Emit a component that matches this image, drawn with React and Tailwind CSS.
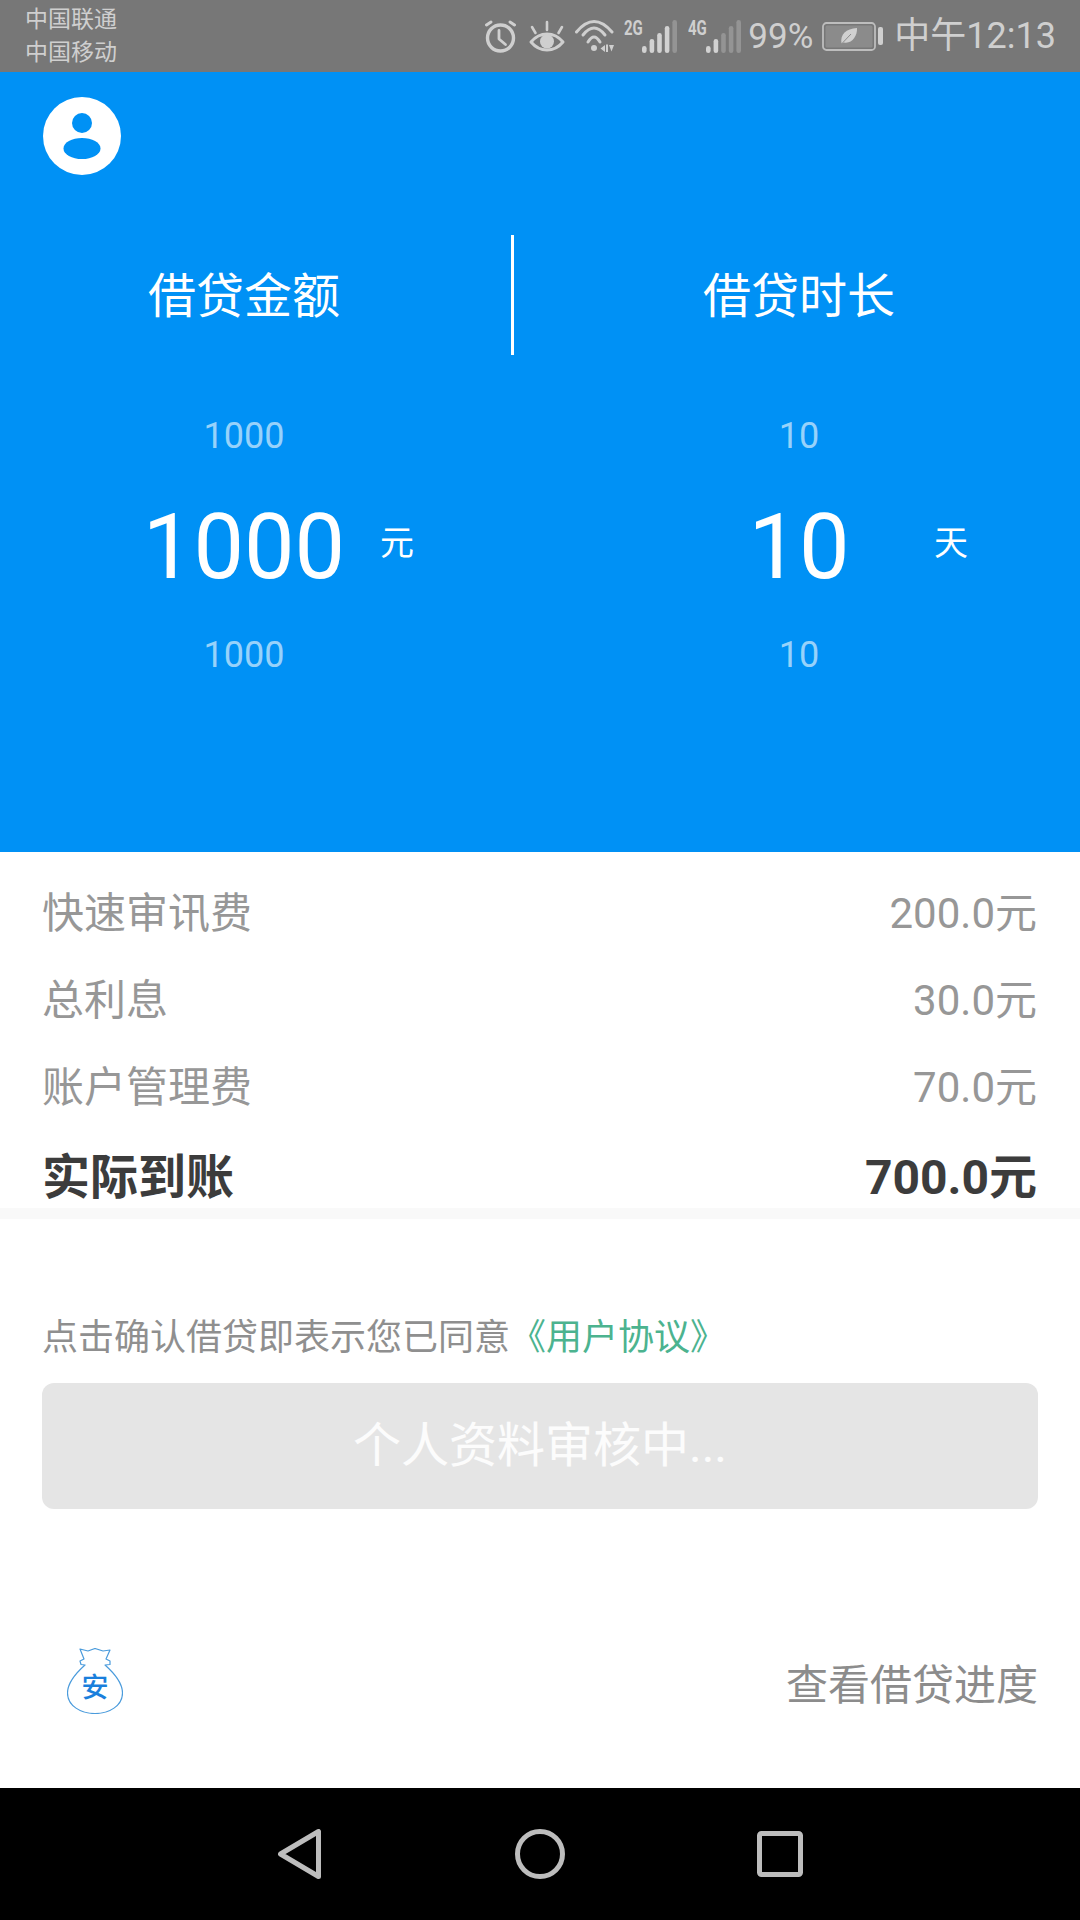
const FONT = "font-['Roboto','Noto_Sans_CJK_SC',sans-serif]";

const FEES = [
  ["快速审讯费", "200.0元"],
  ["总利息", "30.0元"],
  ["账户管理费", "70.0元"],
];

const BARS = [7, 14, 20, 27, 33];

function Alarm() {
  return (
    <svg width="32" height="33" viewBox="0 0 32 33" fill="none" stroke="#cfcfcf" strokeWidth="3.4" strokeLinecap="round" strokeLinejoin="round">
      <circle cx="15.500" cy="18" r="13" />
      <path d="M14 10.500v8.500l6.500 5.500" strokeWidth="2.800" />
      <path d="M1.500 5 6 2M25 2l4.500 3" strokeWidth="3" />
    </svg>
  );
}

function Eye() {
  return (
    <svg width="36" height="33" viewBox="0 0 36 33" fill="none" stroke="#cfcfcf" strokeWidth="3" strokeLinecap="round" strokeLinejoin="round">
      <path d="M2 22C7 16 12 14 18 14s11 2 16 8c-5 6-10 8-16 8S7 28 2 22Z" />
      <circle cx="18" cy="21.500" r="7" fill="#cfcfcf" stroke="none" />
      <path d="M18 2v8M3 7l3.500 6M33 7l-3.500 6" strokeWidth="2.600" />
    </svg>
  );
}

function Wifi() {
  return (
    <svg width="39" height="33" viewBox="0 0 39 33" fill="none" stroke="#cfcfcf" strokeWidth="3" strokeLinecap="round">
      <path d="M1.500 12Q19-9 37 12" />
      <path d="M8 15Q19 1 30 15" />
      <path d="M13 22Q19 12 25 22" />
      <circle cx="19" cy="28" r="3" fill="#cfcfcf" stroke="none" />
      <path d="M25.500 28.500 30 25v7ZM31 24.500h2V32h-2ZM34 25h5l-2.500 6.500Z" fill="#cfcfcf" stroke="none" />
    </svg>
  );
}

function Signal({ label, active }) {
  return (
    <div className="flex h-[34px] w-[54px] items-start">
      <span className="w-[18px] origin-left scale-x-75 text-[20px] leading-[18px] font-bold text-[#cfcfcf]">{label}</span>
      <svg width="36" height="34" viewBox="0 0 36 34">
        {BARS.map((h, i) => (
          <rect
            key={h}
            x={i * 7.6}
            y={34 - h}
            width="4.600"
            height={h}
            rx="2.300"
            fill={i < active ? "#d2d2d2" : "#949494"}
          />
        ))}
      </svg>
    </div>
  );
}

function Battery() {
  return (
    <svg width="61" height="29" viewBox="0 0 61 29" fill="none">
      <rect x="1" y="1" width="52" height="27" rx="3.500" stroke="#bdbdbd" strokeWidth="1.800" />
      <rect x="3.500" y="3.500" width="47" height="22" rx="1.500" fill="#8b8b8b" />
      <path d="M19.500 21.500C18 12 24 7 35 6c.5 8-5 16-13 14.500Z" fill="#d0d0d0" />
      <path d="M19 22.500 29 12" stroke="#8b8b8b" strokeWidth="1" />
      <rect x="56" y="5" width="5" height="18" rx="2" fill="#cfcfcf" />
    </svg>
  );
}

function StatusBar() {
  return (
    <div className="flex h-[72px] shrink-0 items-center justify-between bg-[#777777] pl-[25px] pr-[24px] text-[#cfcfcf]">
      <div className="text-[23px] leading-[33px]">
        <div>中国联通</div>
        <div>中国移动</div>
      </div>
      <div className="flex items-center">
        <Alarm />
        <div className="ml-[12px]"><Eye /></div>
        <div className="ml-[10px]"><Wifi /></div>
        <div className="ml-[10px]"><Signal label="2G" active={4} /></div>
        <div className="ml-[10px]"><Signal label="4G" active={2} /></div>
        <span className="ml-[6px] text-[35px] leading-none">99%</span>
        <div className="ml-[9px]"><Battery /></div>
        <span className="ml-[11px] text-[36px] leading-none">中午12:13</span>
      </div>
    </div>
  );
}

function Wheel({ title, value, unit, offset, unitGap, className }) {
  return (
    <div className={className}>
      <div className="flex h-[120px] items-center pt-[4px] text-[48px] text-white">
        <div style={{ marginLeft: offset }} className="w-[240px] text-center">{title}</div>
      </div>
      <div className="mt-[51px] text-[36px] leading-[60px] text-white/60">
        <div style={{ marginLeft: offset }} className="w-[240px] text-center">{value}</div>
      </div>
      <div className="mt-[34px] flex h-[90px] items-center text-white">
        <div style={{ marginLeft: offset }} className="mt-[6px] w-[240px] text-center text-[90px] leading-none">{value}</div>
        <span style={{ marginLeft: unitGap }} className="mb-[4px] text-[34px]">{unit}</span>
      </div>
      <div className="mt-[35px] text-[36px] leading-[60px] text-white/60">
        <div style={{ marginLeft: offset }} className="w-[240px] text-center">{value}</div>
      </div>
    </div>
  );
}

function Header() {
  return (
    <div className="h-[780px] shrink-0 bg-[#0091f5]">
      <div className="pl-[43px] pt-[25px]">
        <svg width="78" height="78" viewBox="0 0 78 78">
          <circle cx="39" cy="39" r="39" fill="#fff" />
          <circle cx="39" cy="26" r="10" fill="#0091f5" />
          <ellipse cx="39" cy="51.500" rx="18.500" ry="10.500" fill="#0091f5" />
        </svg>
      </div>
      <div className="mt-[60px] flex">
        <Wheel className="w-[511px] shrink-0" title="借贷金额" value="1000" unit="元" offset={124} unitGap={16} />
        <div className="h-[120px] w-[3px] shrink-0 bg-white" />
        <Wheel className="flex-1" title="借贷时长" value="10" unit="天" offset={165} unitGap={15} />
      </div>
    </div>
  );
}

function Fees() {
  return (
    <div className="h-[356px] shrink-0 bg-white pl-[42px] pr-[43px] pt-[18px]">
      {FEES.map(([label, amount]) => (
        <div key={label} className="flex h-[87px] items-center justify-between text-[42px] text-[#979797]">
          <span>{label}</span>
          <span>{amount}</span>
        </div>
      ))}
      <div className="mt-[16px] flex h-[62px] items-center justify-between text-[48px] font-bold text-[#3c3c3c]">
        <span>实际到账</span>
        <span>700.0元</span>
      </div>
    </div>
  );
}

function MoneyBag() {
  return (
    <svg width="56" height="66" viewBox="0 0 56 66" fill="none">
      <path
        d="M13 1 21 3 28 .5 36 3 43 2 39 11 43 13 43 16.500 38 17C47 25 55.500 36 55.500 45 55.500 58 42 65.500 28 65.500S.5 58 .5 45C.5 36 9 25 18 17L14 16.500 13 13 17 11Z"
        stroke="#4a9bdc"
        strokeWidth="1.200"
        strokeLinejoin="round"
        fill="#fff"
      />
      <text x="28" y="49" textAnchor="middle" fontSize="27" fontWeight="500" fill="#1a7fdc" fontFamily="'Noto Sans CJK SC', sans-serif">安</text>
    </svg>
  );
}

function NavBar() {
  return (
    <div className="flex h-[132px] shrink-0 items-center bg-black pl-[278px]">
      <svg width="43" height="50" viewBox="0 0 43 50" fill="none" stroke="#bdbdbd" strokeWidth="5" strokeLinejoin="round">
        <path d="M40.500 2.500V47.500L2.500 25Z" />
      </svg>
      <svg width="50" height="50" viewBox="0 0 50 50" fill="none" stroke="#bdbdbd" strokeWidth="5" className="ml-[194px]">
        <circle cx="25" cy="25" r="22.500" />
      </svg>
      <svg width="46" height="46" viewBox="0 0 46 46" fill="none" stroke="#bdbdbd" strokeWidth="5" strokeLinejoin="round" className="ml-[192px]">
        <rect x="2.500" y="2.500" width="41" height="41" rx="2" />
      </svg>
    </div>
  );
}

export default function App() {
  return (
    <div className={`flex h-[1920px] w-[1080px] flex-col overflow-hidden bg-white ${FONT}`}>
      <StatusBar />
      <Header />
      <Fees />
      <div className="h-[11px] shrink-0 bg-[#f9f9f9]" />

      <div className="flex flex-1 flex-col px-[42px]">
        <div className="mt-[106px] text-[36px] leading-[26px] text-[#8f8f8f]">
          点击确认借贷即表示您已同意<span className="text-[#4cb38f]">《用户协议》</span>
        </div>
        <div className="mt-[32px] flex h-[126px] items-center justify-center rounded-[12px] bg-[#e5e5e5] text-[48px] text-white/90">
          个人资料审核中...
        </div>
        <div className="mt-[139px] flex items-start justify-between pl-[25px]">
          <MoneyBag />
          <span className="pt-[6px] text-[42px] text-[#8c8c8c]">查看借贷进度</span>
        </div>
      </div>

      <NavBar />
    </div>
  );
}
